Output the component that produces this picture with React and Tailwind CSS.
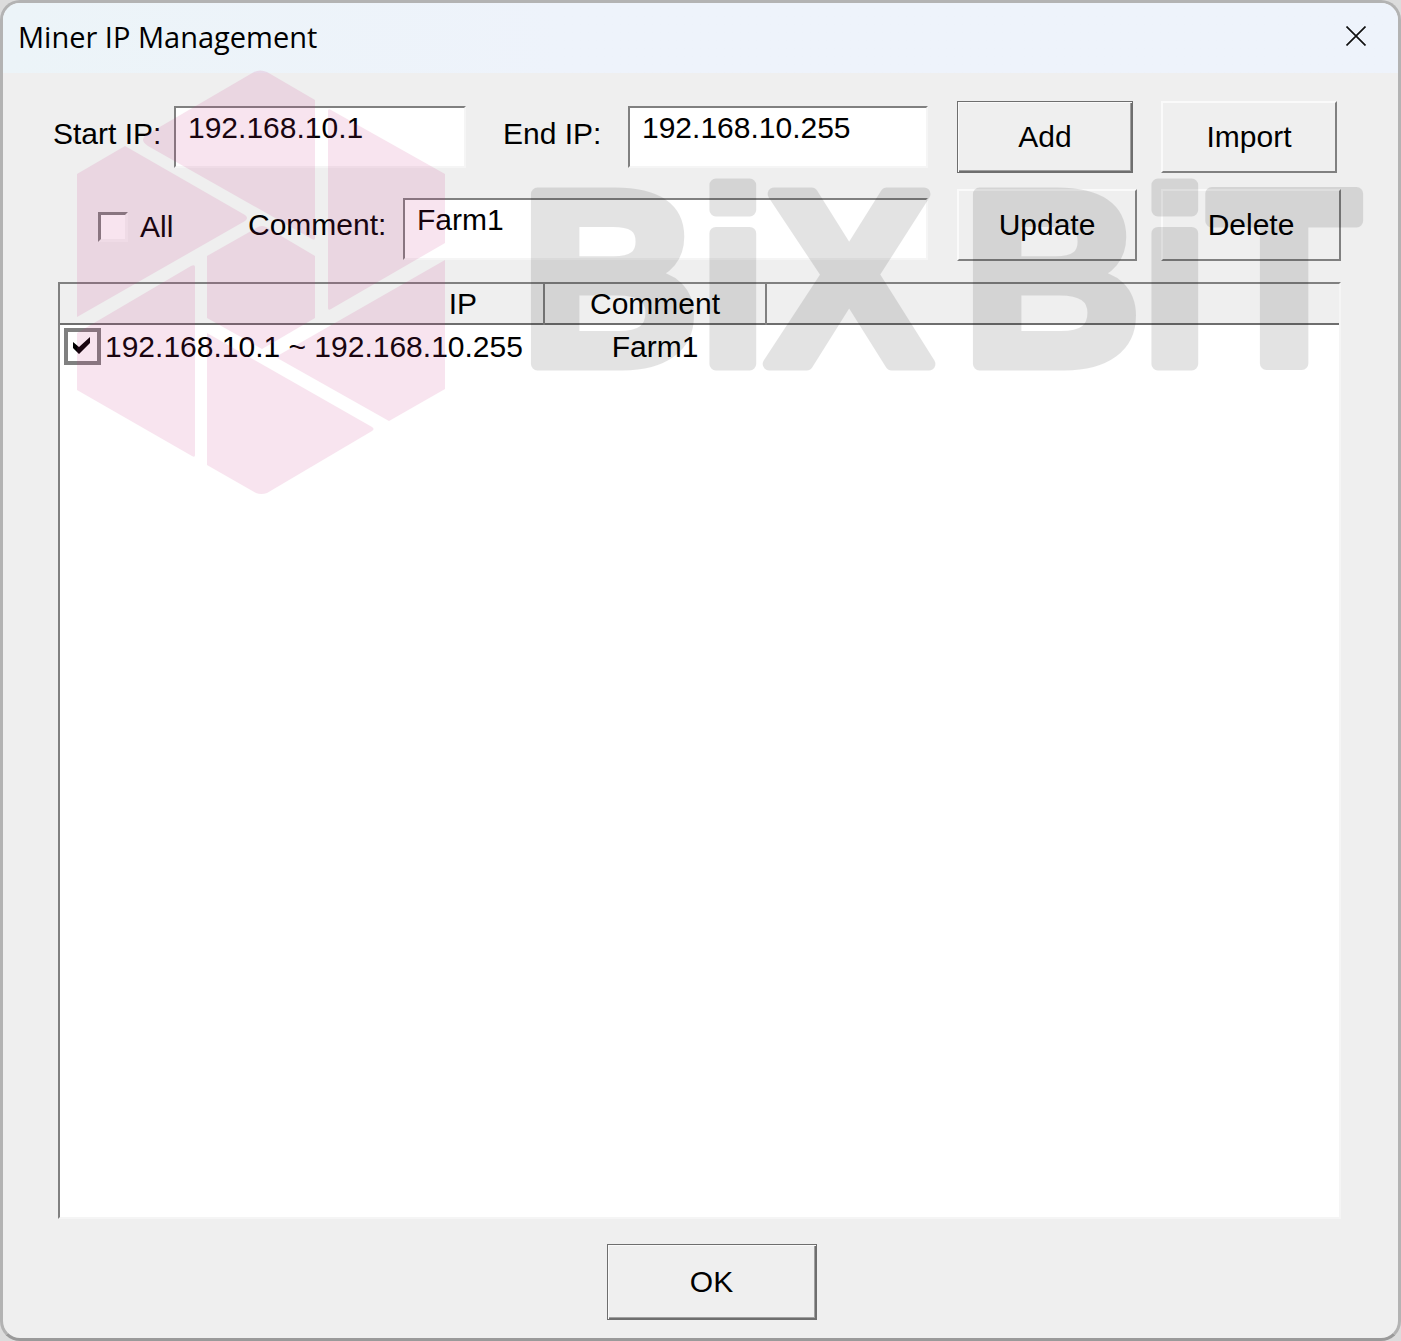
import React, { useState } from 'react';

const rows = [{ id: 1, range: '192.168.10.1 ~ 192.168.10.255', comment: 'Farm1' }];

const inputClass =
  'h-[62px] min-w-0 border-2 border-t-[#808080] border-l-[#808080] border-r-[#f5f5f5] border-b-[#f5f5f5] bg-white pl-3 pb-[18px] outline-none';

const buttonClass =
  'h-[72px] border-2 border-t-[#fafafa] border-l-[#fafafa] border-r-[#808080] border-b-[#808080] bg-[#efefef]';

const defaultButtonClass =
  'border border-[#6e6e6e] bg-[#efefef] shadow-[inset_1px_1px_0_#fafafa,inset_-1px_-1px_0_#6e6e6e,inset_-2px_-2px_0_#a0a0a0]';

function Watermark() {
  return (
    <svg
      className="pointer-events-none absolute inset-x-0 top-0 w-full"
      viewBox="0 0 1401 500"
      aria-hidden="true"
    >
      <g fill="#c82a80" opacity="0.12">
        <path d="M254 72Q260 69 267 72L315 100V238Q315 241 312 239L148 146Q139 140 146 135Z" />
        <path d="M77 174L125 146L245 215Q249 218 245 221L77 317Z" />
        <path d="M328 111Q328 108 331 110L445 174V243L331 309Q328 311 328 308Z" />
        <path d="M207 256L258 227Q262 225 266 227L315 256V318L262 349L207 318Z" />
        <path d="M445 260V389L389 421L279 359Q275 357 279 355Z" />
        <path d="M195 267V455Q195 458 192 456L77 390V333L191 266Q195 264 195 267Z" />
        <path d="M207 333L372 427Q375 429 372 431L267 493Q261 495 256 493L207 465Z" />
      </g>
      <g opacity="0.105">
        <text
          x="521"
          y="364"
          className="fill-black stroke-black font-['Liberation_Sans',Arial,sans-serif] text-[246px] font-bold"
          strokeWidth="13"
          strokeLinejoin="round"
        >
          BiX<tspan x="963">BiT</tspan>
        </text>
      </g>
    </svg>
  );
}

function App() {
  const [startIp, setStartIp] = useState('192.168.10.1');
  const [endIp, setEndIp] = useState('192.168.10.255');
  const [comment, setComment] = useState('Farm1');
  const [all, setAll] = useState(false);
  const [selected, setSelected] = useState([1]);

  const toggleRow = (id) => {
    setSelected((prev) => (prev.includes(id) ? prev.filter((x) => x !== id) : [...prev, id]));
  };

  return (
    <div className="relative flex min-h-screen bg-[#dcdcdc] font-['Liberation_Sans',Arial,sans-serif] text-[30px] leading-9 text-black">
      <div className="flex flex-1 flex-col overflow-hidden rounded-[20px] border-[3px] border-[#b3b3b3] border-b-[#9a9a9a] bg-[#efefef]">
        <header className="flex h-[70px] items-center justify-between bg-linear-to-r from-[#ecf4f8] to-[#eef3fb] to-40% pr-8 pl-[15px]">
          <h1 className="pb-0.5 font-['Open_Sans','Segoe_UI',sans-serif] text-[29px]">Miner IP Management</h1>
          <button type="button" aria-label="Close" className="pb-1">
            <svg className="size-5" viewBox="0 0 20 20" fill="none" stroke="#111" strokeWidth="1.7">
              <path d="M0.5 0.5L19.5 19.5M19.5 0.5L0.5 19.5" />
            </svg>
          </button>
        </header>

        <form className="flex gap-[29px] pt-7 pr-[57px] pl-[50px]" onSubmit={(e) => e.preventDefault()}>
          <div className="flex min-w-0 flex-1 flex-col gap-4">
            <div className="flex h-[72px] items-center">
              <label htmlFor="startIp" className="w-[121px] pb-1.5">Start IP:</label>
              <input
                id="startIp"
                type="text"
                className={`${inputClass} w-[292px]`}
                value={startIp}
                onChange={(e) => setStartIp(e.target.value)}
              />
              <label htmlFor="endIp" className="ml-[37px] w-[125px] pb-1.5">End IP:</label>
              <input
                id="endIp"
                type="text"
                className={`${inputClass} flex-1`}
                value={endIp}
                onChange={(e) => setEndIp(e.target.value)}
              />
            </div>
            <div className="flex h-[72px] items-center pt-2 pl-[45px]">
              <label className="flex w-[150px] items-center gap-3 pb-1">
                <input
                  type="checkbox"
                  className="size-[30px] appearance-none border-3 border-t-[#808080] border-l-[#808080] border-r-[#f5f5f5] border-b-[#f5f5f5] bg-white checked:bg-[#808080]"
                  checked={all}
                  onChange={(e) => setAll(e.target.checked)}
                />
                All
              </label>
              <label htmlFor="comment" className="w-[155px] pb-2">Comment:</label>
              <input
                id="comment"
                type="text"
                className={`${inputClass} flex-1`}
                value={comment}
                onChange={(e) => setComment(e.target.value)}
              />
            </div>
          </div>
          <div className="grid w-[384px] grid-cols-2 gap-x-6 gap-y-4">
            <button type="submit" className={`${defaultButtonClass} mr-1 h-[72px]`}>Add</button>
            <button type="button" className={`${buttonClass} mr-1`}>Import</button>
            <button type="button" className={buttonClass}>Update</button>
            <button type="button" className={buttonClass}>Delete</button>
          </div>
        </form>

        <div className="mt-[21px] mr-[57px] ml-[55px] flex-1 border-2 border-t-[#808080] border-l-[#808080] border-r-[#f5f5f5] border-b-[#f5f5f5] bg-white">
          <table className="w-full table-fixed border-collapse">
            <thead>
              <tr className="h-10 border-b-2 border-[#6e6e6e] bg-[#efefef]">
                <th className="w-[484px] border-r-2 border-[#808080] pr-[66px] text-right font-normal">IP</th>
                <th className="w-[222px] border-r-2 border-[#808080] text-center font-normal">Comment</th>
                <th />
              </tr>
            </thead>
            <tbody>
              {rows.map((row) => (
                <tr key={row.id}>
                  <td className="pt-[3px] pl-1">
                    <label className="flex items-center gap-1 whitespace-nowrap">
                      <span className="relative size-[37px]">
                        <input
                          type="checkbox"
                          className="peer block size-full appearance-none border-4 border-[#808080] bg-white"
                          checked={selected.includes(row.id)}
                          onChange={() => toggleRow(row.id)}
                        />
                        <svg
                          className="pointer-events-none absolute inset-0 hidden size-full peer-checked:block"
                          viewBox="0 0 37 37"
                        >
                          <path d="M9 14L15 19L26 9V15L15 26L9 20Z" fill="#000" />
                        </svg>
                      </span>
                      {row.range}
                    </label>
                  </td>
                  <td className="pt-[3px] text-center">{row.comment}</td>
                  <td />
                </tr>
              ))}
            </tbody>
          </table>
        </div>

        <footer className="flex justify-center pt-[25px] pb-[18px] pl-[22px]">
          <button type="button" className={`${defaultButtonClass} h-[76px] w-[210px]`}>OK</button>
        </footer>
      </div>
      <Watermark />
    </div>
  );
}

export default App;
